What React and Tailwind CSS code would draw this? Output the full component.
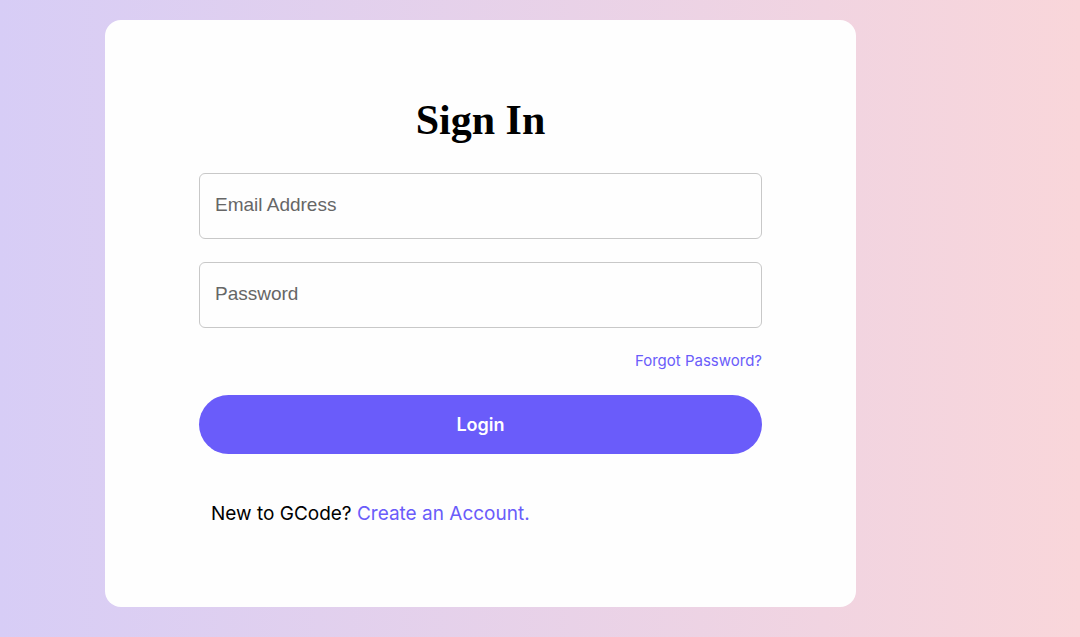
export default function App() {
  return (
    <main className="min-h-screen bg-linear-to-r from-[#d7cdf6] to-[#f9d6da] px-[105px] pt-5 pb-[30px] font-['Inter',sans-serif]">
      <section className="w-full max-w-[751px] rounded-2xl bg-[#fefefe] px-[94px] pt-[72px] pb-[79px]">
        <h1 className="text-center font-['Liberation_Serif',serif] text-[42px] leading-[56px] font-bold text-black">
          Sign In
        </h1>
        <form className="mt-[25px]" onSubmit={(event) => event.preventDefault()}>
          <input
            type="email"
            aria-label="Email Address"
            placeholder="Email Address"
            className="block h-[66px] w-full rounded-md border border-[#c8c8c8] bg-[#fefefe] px-[15px] pb-0.5 font-['Liberation_Sans',sans-serif] text-[19px] text-black placeholder:text-[#666666]"
          />
          <input
            type="password"
            aria-label="Password"
            placeholder="Password"
            className="mt-[23px] block h-[66px] w-full rounded-md border border-[#c8c8c8] bg-[#fefefe] px-[15px] pb-0.5 font-['Liberation_Sans',sans-serif] text-[19px] text-black placeholder:text-[#666666]"
          />
          <div className="mt-[21px] text-right">
            <a href="#forgot" className="block text-[15px] leading-6 text-[#6a5cfa]">
              Forgot Password?
            </a>
          </div>
          <button
            type="submit"
            className="mt-[22px] block h-[59px] w-full rounded-full bg-[#6a5cfa] text-lg font-semibold text-white"
          >
            Login
          </button>
        </form>
        <p className="mt-[46px] pl-3 text-[19px] leading-7 text-black">
          New to GCode?{" "}
          <a href="#register" className="text-[#6a5cfa]">
            Create an Account.
          </a>
        </p>
      </section>
    </main>
  );
}
